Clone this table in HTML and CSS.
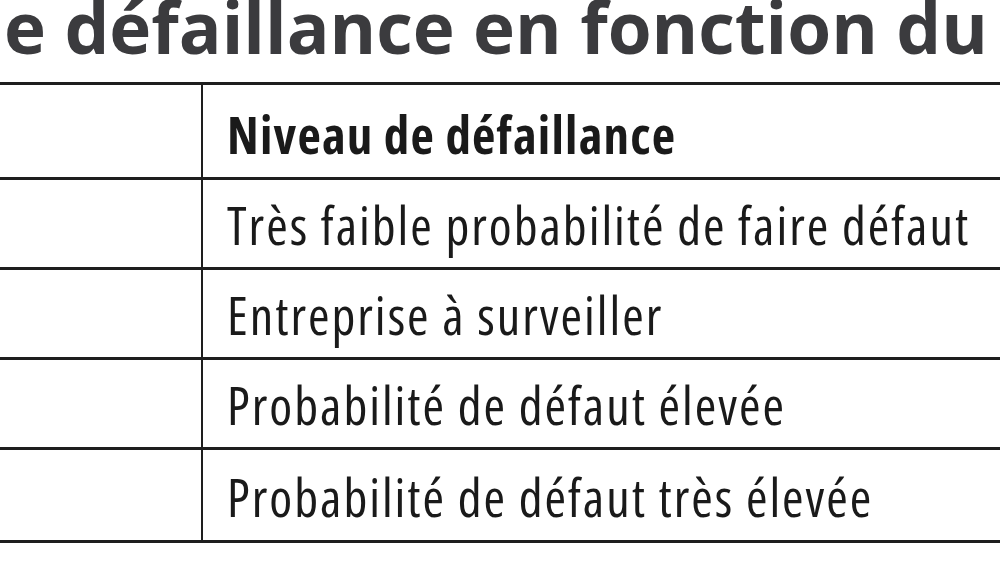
FILE: index.html
```html
<!DOCTYPE html>
<html lang="fr">
<head>
<meta charset="utf-8">
<title>Niveau de défaillance</title>
<link rel="stylesheet" href="styles.css">
</head>
<body>
<h1 class="title">e défaillance en fonction du</h1>
<table class="grid">
  <tr class="head-row">
    <td class="side"></td>
    <td class="cell head">Niveau de défaillance</td>
  </tr>
  <tr><td class="side"></td><td class="cell">Très faible probabilité de faire défaut</td></tr>
  <tr><td class="side"></td><td class="cell">Entreprise à surveiller</td></tr>
  <tr><td class="side"></td><td class="cell">Probabilité de défaut élevée</td></tr>
  <tr class="last-row"><td class="side"></td><td class="cell">Probabilité de défaut très élevée</td></tr>
</table>
</body>
</html>
```

FILE: styles.css
```css
html, body {
  margin: 0;
  padding: 0;
  background: #ffffff;
  overflow: hidden;
  width: 1000px;
  height: 563px;
}

.title {
  margin: -8px 0 0 4px;
  font-family: "Open Sans", "Liberation Sans", sans-serif;
  font-weight: 700;
  font-size: 71px;
  line-height: 70px;
  color: #3b3b3e;
  white-space: nowrap;
  height: 70px;
}

.grid {
  margin-top: 20px;
  border-collapse: collapse;
  width: 1010px;
  font-family: "Open Sans", "DejaVu Sans", sans-serif;
  font-stretch: 75%;
  color: #1a1a1a;
}

.grid td {
  border-top: 3px solid #1e1e1e;
  border-bottom: 3px solid #1e1e1e;
  padding: 0;
  height: 90px;
  vertical-align: middle;
  box-sizing: border-box;
}

.grid .head-row td {
  height: 95px;
}

.grid .last-row td {
  height: 93px;
}

.side {
  width: 202px;
  border-right: 2px solid #1e1e1e;
}

.cell {
  padding-left: 24px !important;
  padding-top: 2px !important;
  font-size: 52px;
  letter-spacing: 2px;
  white-space: nowrap;
}

.head {
  font-weight: 700;
  font-size: 51px;
  letter-spacing: 1.2px;
  padding-top: 6px !important;
}
```
